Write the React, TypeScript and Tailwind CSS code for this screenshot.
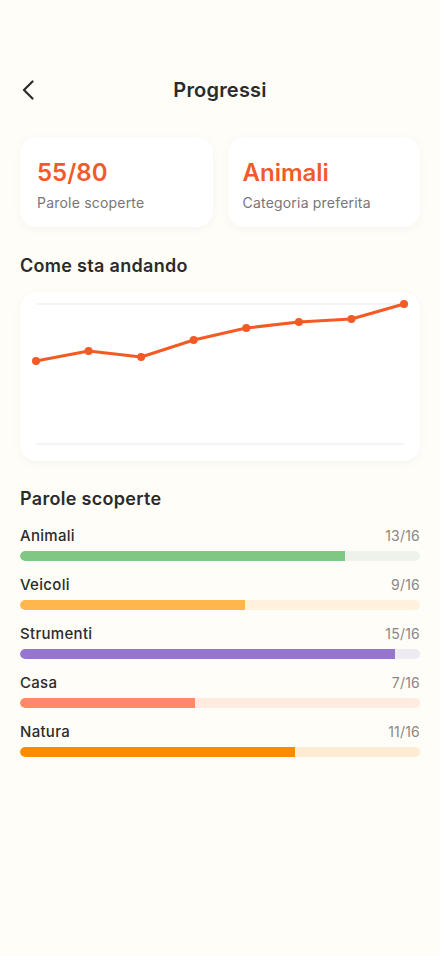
const points = [362, 352, 358, 341, 329, 323, 320, 305];

const categories = [
  { name: "Animali", done: 13, fill: "bg-[#81c784]", track: "bg-[#edf3ea]" },
  { name: "Veicoli", done: 9, fill: "bg-[#ffb74d]", track: "bg-[#fff1de]" },
  { name: "Strumenti", done: 15, fill: "bg-[#9575cd]", track: "bg-[#edeaf2]" },
  { name: "Casa", done: 7, fill: "bg-[#ff8a65]", track: "bg-[#ffebe0]" },
  { name: "Natura", done: 11, fill: "bg-[#fb8c00]", track: "bg-[#ffecd2]" },
];

function Chart() {
  // chart card starts at x=20, y=293 in page coords
  const xs = points.map((_, i) => 16 + (i * 368) / 7);
  const ys = points.map((y) => y - 293);
  const d = xs.map((x, i) => `${i === 0 ? "M" : "L"}${x} ${ys[i]}`).join(" ");
  return (
    <svg width="400" height="169" viewBox="0 0 400 169" className="block">
      <line x1="16" y1="12" x2="384" y2="12" stroke="#eef0f3" strokeWidth="1.5" />
      <line x1="16" y1="152" x2="384" y2="152" stroke="#eef0f3" strokeWidth="1.5" />
      <path d={d} fill="none" stroke="#f45a24" strokeWidth="3" strokeLinejoin="round" strokeLinecap="round" />
      {xs.map((x, i) => (
        <circle key={i} cx={x} cy={ys[i]} r="4" fill="#f45a24" />
      ))}
    </svg>
  );
}

export default function App() {
  return (
    <div className="min-h-[956px] w-[440px] bg-[#fffdf7] pt-[60px] font-['Inter',sans-serif] text-[#2b2b2b]">
      {/* Header */}
      <div className="relative flex h-[60px] items-center justify-center">
        <button className="absolute left-[22px] top-[20px] text-[#2b2b2b]">
          <svg width="12" height="20" viewBox="0 0 12 20" className="block">
            <polyline points="10.5,1.5 2,10 10.5,18.5" fill="none" stroke="currentColor" strokeWidth="2.2" strokeLinecap="round" strokeLinejoin="round" />
          </svg>
        </button>
        <h1 className="text-[20px] font-semibold leading-none tracking-[0.2px]">Progressi</h1>
      </div>

      {/* Stats */}
      <div className="mt-[17px] grid grid-cols-2 gap-[15px] px-[20px]">
        <div className="rounded-[16px] bg-white px-[17px] pb-[15px] pt-[21px] shadow-[0_2px_10px_rgba(0,0,0,0.04)]">
          <div className="text-[24px] font-semibold leading-[30px] text-[#f25a2a]">55/80</div>
          <div className="mt-[6px] text-[14px] leading-[18px] tracking-[0.2px] text-[#777]">Parole scoperte</div>
        </div>
        <div className="rounded-[16px] bg-white px-[15px] pb-[15px] pt-[21px] shadow-[0_2px_10px_rgba(0,0,0,0.04)]">
          <div className="text-[24px] font-semibold leading-[30px] text-[#f25a2a]">Animali</div>
          <div className="mt-[6px] text-[14px] leading-[18px] tracking-[0.2px] text-[#777]">Categoria preferita</div>
        </div>
      </div>

      {/* Chart */}
      <h2 className="mt-[27px] px-[20px] text-[18px] font-semibold leading-[24px] tracking-[0.3px]">Come sta andando</h2>
      <div className="mx-[20px] mt-[14px] rounded-[16px] bg-white shadow-[0_2px_10px_rgba(0,0,0,0.04)]">
        <Chart />
      </div>

      {/* Categories */}
      <h2 className="mt-[26px] px-[20px] text-[18px] font-semibold leading-[24px] tracking-[0.3px]">Parole scoperte</h2>
      <div className="mt-[15px] flex flex-col gap-[14px] px-[20px]">
        {categories.map((c) => (
          <div key={c.name}>
            <div className="flex items-center justify-between">
              <span className="text-[15px] font-medium leading-[20px] tracking-[0.3px] text-[#2b2b2b]">{c.name}</span>
              <span className="text-[14px] leading-[20px] tracking-[0.2px] text-[#888]">{c.done}/16</span>
            </div>
            <div className={`mt-[5px] h-[10px] w-full overflow-hidden rounded-full ${c.track}`}>
              <div className={`h-full rounded-l-full ${c.fill}`} style={{ width: `${(c.done / 16) * 100}%` }} />
            </div>
          </div>
        ))}
      </div>
    </div>
  );
}
